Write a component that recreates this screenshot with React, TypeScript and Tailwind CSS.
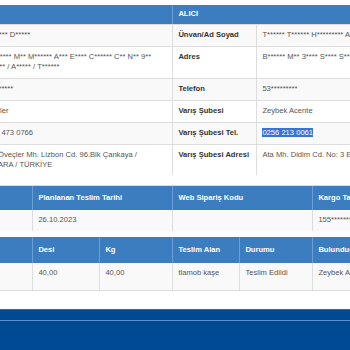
import React from 'react';

const th =
  'flex items-center px-[5.4px] font-bold text-white border-r border-[#6a9fd4] last:border-r-0 whitespace-nowrap';
const td = 'px-[5.4px] pt-[4.5px] border-r border-[#dddddd] last:border-r-0 whitespace-nowrap';

const senderRows = [
  { label: 'Ünvan/Ad Soyad', value: ['T******* D*****'], h: 'h-[22px]' },
  {
    label: 'Adres',
    value: ['Ç******** M** M****** A*** E**** C****** C** N** 9**', 'A****** / A***** / T******'],
    h: 'h-[32px]',
  },
  { label: 'Telefon', value: ['5*********'], h: 'h-[22px]' },
  { label: 'Çıkış Şubesi', value: ['Öveçler'], h: 'h-[22px]' },
  { label: 'Çıkış Şubesi Tel.', value: ['0312 473 0766'], h: 'h-[22px]' },
  {
    label: 'Çıkış Şubesi Adresi',
    value: ['Kan Öveçler Mh. Lizbon Cd. 96.Blk Çankaya /', 'ANKARA / TÜRKİYE'],
    h: 'h-[31px]',
  },
];

const receiverRows = [
  { label: 'Ünvan/Ad Soyad', value: 'T****** T****** H********* A*** K****' },
  { label: 'Adres', value: 'B****** M** 3**** S**** S** N** 1 D****' },
  { label: 'Telefon', value: '53*********' },
  { label: 'Varış Şubesi', value: 'Zeybek Acente' },
  { label: 'Varış Şubesi Tel.', value: '0256 213 0061', selected: true },
  { label: 'Varış Şubesi Adresi', value: 'Ata Mh. Didim Cd. No: 3 Efeler / AYDIN' },
];

export default function App() {
  return (
    <div className="w-[350px] h-[350px] overflow-hidden bg-white font-['Liberation_Sans',Arial,sans-serif] text-[7.6px] leading-[10.7px] text-[#555555]">
      <div className="w-[560px] -ml-[107px] flex flex-col h-full">
        {/* Gönderici / Alıcı */}
        <div className="mt-[5px]">
          <div className="grid grid-cols-[280px_280px] h-[19px] bg-[#3b7dbf]">
            <div className={th}>GÖNDERİCİ</div>
            <div className={th}>ALICI</div>
          </div>
          {senderRows.map((row, i) => {
            const right = receiverRows[i];
            return (
              <div
                key={row.label}
                className={`grid grid-cols-[84px_196px_84px_196px] border-t border-[#dddddd] ${row.h} ${
                  i % 2 === 0 ? 'bg-[#f9f9f9]' : 'bg-white'
                }`}
              >
                <div className={`${td} font-bold text-[#333333]`}>{row.label}</div>
                <div className={td}>
                  {row.value.map((line) => (
                    <div key={line}>{line}</div>
                  ))}
                </div>
                <div className={`${td} font-bold text-[#333333]`}>{right.label}</div>
                <div className={td}>
                  {right.selected ? (
                    <span className="bg-[#3a72d6] text-white">{right.value}</span>
                  ) : (
                    right.value
                  )}
                </div>
              </div>
            );
          })}
        </div>

        {/* Tarih / Kodlar */}
        <div className="mt-[10px] border-t border-[#dddddd]">
          <div className="grid grid-cols-[140px_140px_140px_140px] h-[24px] bg-[#3b7dbf]">
            <div className={th}>Çıkış Tarihi</div>
            <div className={th}>Planlanan Teslim Tarihi</div>
            <div className={th}>Web Sipariş Kodu</div>
            <div className={th}>Kargo Takip No</div>
          </div>
          <div className="grid grid-cols-[140px_140px_140px_140px] h-[21px] bg-[#f9f9f9]">
            <div className={td}>24.10.2023</div>
            <div className={td}>26.10.2023</div>
            <div className={td}></div>
            <div className={td}>155*********</div>
          </div>
        </div>

        {/* Gönderi detay */}
        <div className="mt-[6px]">
          <div className="grid grid-cols-[140px_67px_73px_67px_73px_140px] h-[26px] bg-[#3b7dbf]">
            <div className={th}>Ödeme Tipi</div>
            <div className={th}>Desi</div>
            <div className={th}>Kg</div>
            <div className={th}>Teslim Alan</div>
            <div className={th}>Durumu</div>
            <div className={th}>Bulunduğu Şube</div>
          </div>
          <div className="grid grid-cols-[140px_67px_73px_67px_73px_140px] h-[28px] bg-[#f9f9f9] border-b border-[#dddddd]">
            <div className={td}>Gönderici Ödemeli</div>
            <div className={td}>40,00</div>
            <div className={td}>40,00</div>
            <div className={td}>tlamob kaşe</div>
            <div className={td}>Teslim Edildi</div>
            <div className={td}>Zeybek Acente</div>
          </div>
        </div>

        {/* Footer */}
        <div className="mt-[18px] flex-1 flex flex-col bg-[#004a93] border-t border-[#2f68ab]">
          <div className="h-[10px]" />
          <div className="h-px bg-[#5a90d0]" />
          <div className="flex-1" />
        </div>
      </div>
    </div>
  );
}
